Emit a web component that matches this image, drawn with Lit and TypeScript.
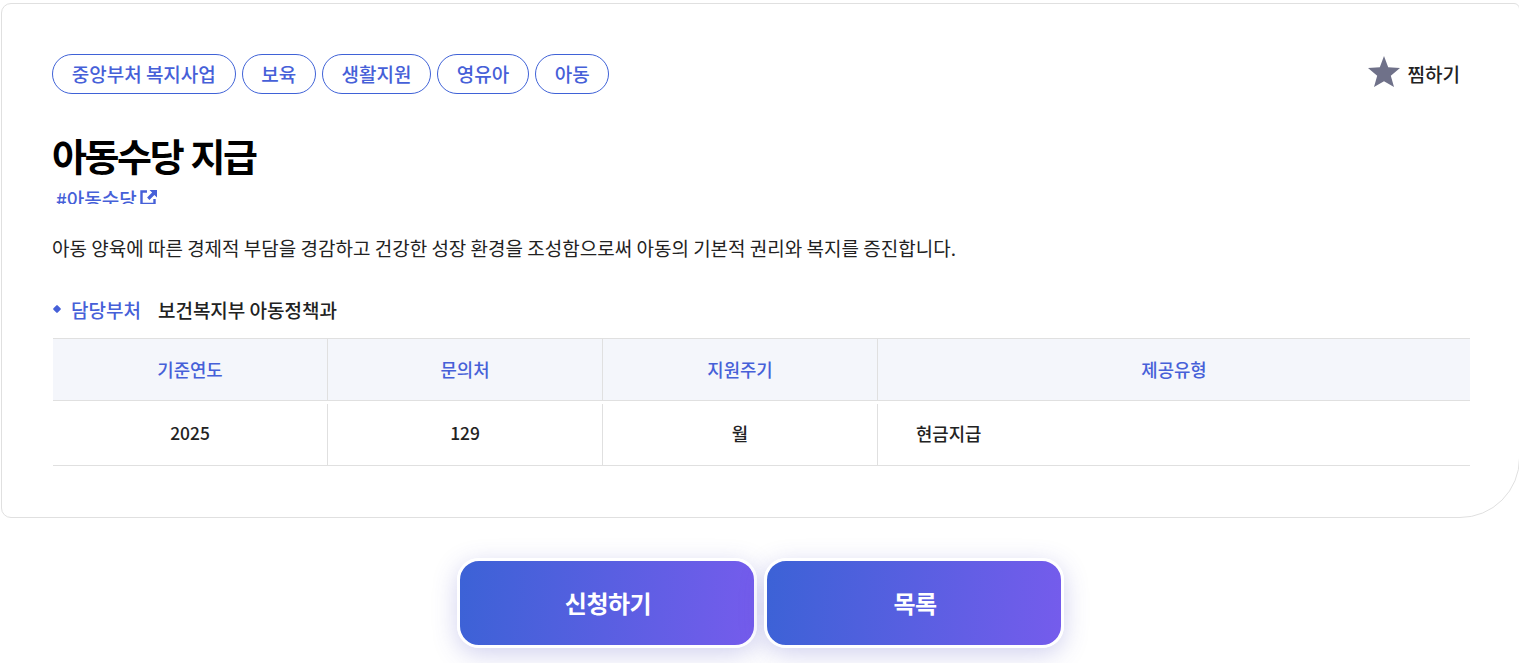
import {LitElement, html, css} from 'lit';
import {customElement} from 'lit/decorators.js';

const tags = ['중앙부처 복지사업', '보육', '생활지원', '영유아', '아동'];

@customElement('app-root')
class AppRoot extends LitElement {
  static styles = css`
    :host {
      display: block;
      height: 663px;
      overflow: hidden;
      background: #fff;
      font-family: 'Noto Sans CJK KR', 'Noto Sans', sans-serif;
      color: #222;
    }
    .card {
      box-sizing: border-box;
      width: 1519px;
      height: 515px;
      margin: 3px 0 0 1px;
      padding: 50px 49px 0 50px;
      border: 1px solid #e0e0e0;
      border-radius: 10px 6px 60px 10px;
    }
    .top {
      display: flex;
      justify-content: space-between;
      align-items: center;
    }
    .tags {
      display: flex;
      gap: 6px;
    }
    .tag {
      box-sizing: border-box;
      height: 40px;
      padding: 0 18.7px 2px;
      display: flex;
      align-items: center;
      border: 1px solid #3f62d7;
      border-radius: 20px;
      color: #4660d8;
      font-size: 19px;
      font-weight: 500;
    }
    .fav {
      display: flex;
      align-items: center;
      gap: 7px;
      margin-right: 10px;
      padding-bottom: 2px;
      font-size: 19px;
      font-weight: 500;
      color: #222;
    }
    .fav svg {
      display: block;
      margin-top: -2px;
    }
    h1 {
      margin: 34px 0 0;
      font-size: 38px;
      line-height: 54px;
      font-weight: 700;
      color: #000;
      letter-spacing: -2.4px;
      word-spacing: 2px;
    }
    .hash {
      display: flex;
      align-items: flex-start;
      gap: 3px;
      height: 22px;
      margin: 0 0 0 4px;
      overflow: hidden;
      color: #4660d8;
      font-size: 19px;
      line-height: 34px;
      font-weight: 500;
    }
    .hash svg {
      margin-top: 8px;
    }
    .desc {
      margin: 29px 0 0;
      font-size: 19px;
      line-height: 30px;
      color: #222;
    }
    .dept {
      box-sizing: border-box;
      display: flex;
      align-items: center;
      height: 30px;
      margin-top: 32px;
      padding-bottom: 2px;
      font-size: 19px;
      font-weight: 500;
    }
    .dot {
      width: 6px;
      height: 6px;
      margin: 0 11px 0 2px;
      background: #4660d8;
      transform: rotate(45deg);
      border-radius: 1px;
    }
    .dept b {
      font-weight: 500;
      color: #4660d8;
      margin-right: 17px;
    }
    .table {
      display: grid;
      grid-template-columns: 275px 275px 275px 1fr;
      margin: 13px 0 0 1px;
      border-top: 1px solid #e0e0e0;
      font-size: 17.8px;
      font-weight: 500;
    }
    .th {
      box-sizing: border-box;
      height: 62px;
      padding-bottom: 2px;
      display: flex;
      align-items: center;
      justify-content: center;
      background: #f4f6fb;
      color: #4660d8;
      border-right: 1px solid #e0e0e0;
      border-bottom: 1px solid #e0e0e0;
    }
    .td {
      box-sizing: border-box;
      height: 61px;
      margin-top: 3px;
      padding-bottom: 4px;
      display: flex;
      align-items: center;
      justify-content: center;
      color: #222;
      border-right: 1px solid #e0e0e0;
      box-shadow: 0 1px 0 #e0e0e0;
    }
    .td.num {
      font-size: 17.4px;
    }
    .th:nth-child(4n),
    .td:nth-child(4n) {
      border-right: 0;
    }
    .td.left {
      justify-content: flex-start;
      padding-left: 38px;
    }
    .actions {
      display: flex;
      justify-content: center;
      gap: 7px;
      margin: 40px 0 0 2px;
    }
    .btn {
      box-sizing: border-box;
      width: 300px;
      height: 90px;
      padding: 0 0 2px 2px;
      display: flex;
      align-items: center;
      justify-content: center;
      border: 3px solid #fff;
      border-radius: 22px;
      background: linear-gradient(95deg, #3c62d6, #755cec);
      box-shadow: 0 6px 24px rgba(70, 70, 190, 0.25);
      color: #fff;
      font-size: 24px;
      font-weight: 700;
      letter-spacing: -0.5px;
    }
  `;

  render() {
    return html`
      <div class="card">
        <div class="top">
          <div class="tags">
            ${tags.map((t) => html`<span class="tag">${t}</span>`)}
          </div>
          <div class="fav">
            <svg width="34" height="34" viewBox="0 0 34 34">
              <path fill="#6f7189" d="M17 1l4.200 11.200L33 13l-9.200 7.800L27 32l-10-5.800L7 32l3.200-11.200L1 13l11.800-.8z" />
            </svg>
            찜하기
          </div>
        </div>
        <h1>아동수당 지급</h1>
        <div class="hash">
          #아동수당
          <svg width="17" height="15" viewBox="0 0 17 15">
            <path fill="none" stroke="#4660d8" stroke-width="2.400" d="M7 1.500H1.500v12.500h13V9" />
            <path fill="#4660d8" d="M9.500 0H17v7.500l-2.600-2.600-5 5-2.300-2.300 5-5z" />
          </svg>
        </div>
        <p class="desc">아동 양육에 따른 경제적 부담을 경감하고 건강한 성장 환경을 조성함으로써 아동의 기본적 권리와 복지를 증진합니다.</p>
        <div class="dept">
          <span class="dot"></span>
          <b>담당부처</b>
          <span>보건복지부 아동정책과</span>
        </div>
        <div class="table">
          <div class="th">기준연도</div>
          <div class="th">문의처</div>
          <div class="th">지원주기</div>
          <div class="th">제공유형</div>
          <div class="td num">2025</div>
          <div class="td num">129</div>
          <div class="td">월</div>
          <div class="td left">현금지급</div>
        </div>
      </div>
      <div class="actions">
        <div class="btn">신청하기</div>
        <div class="btn">목록</div>
      </div>
    `;
  }
}
